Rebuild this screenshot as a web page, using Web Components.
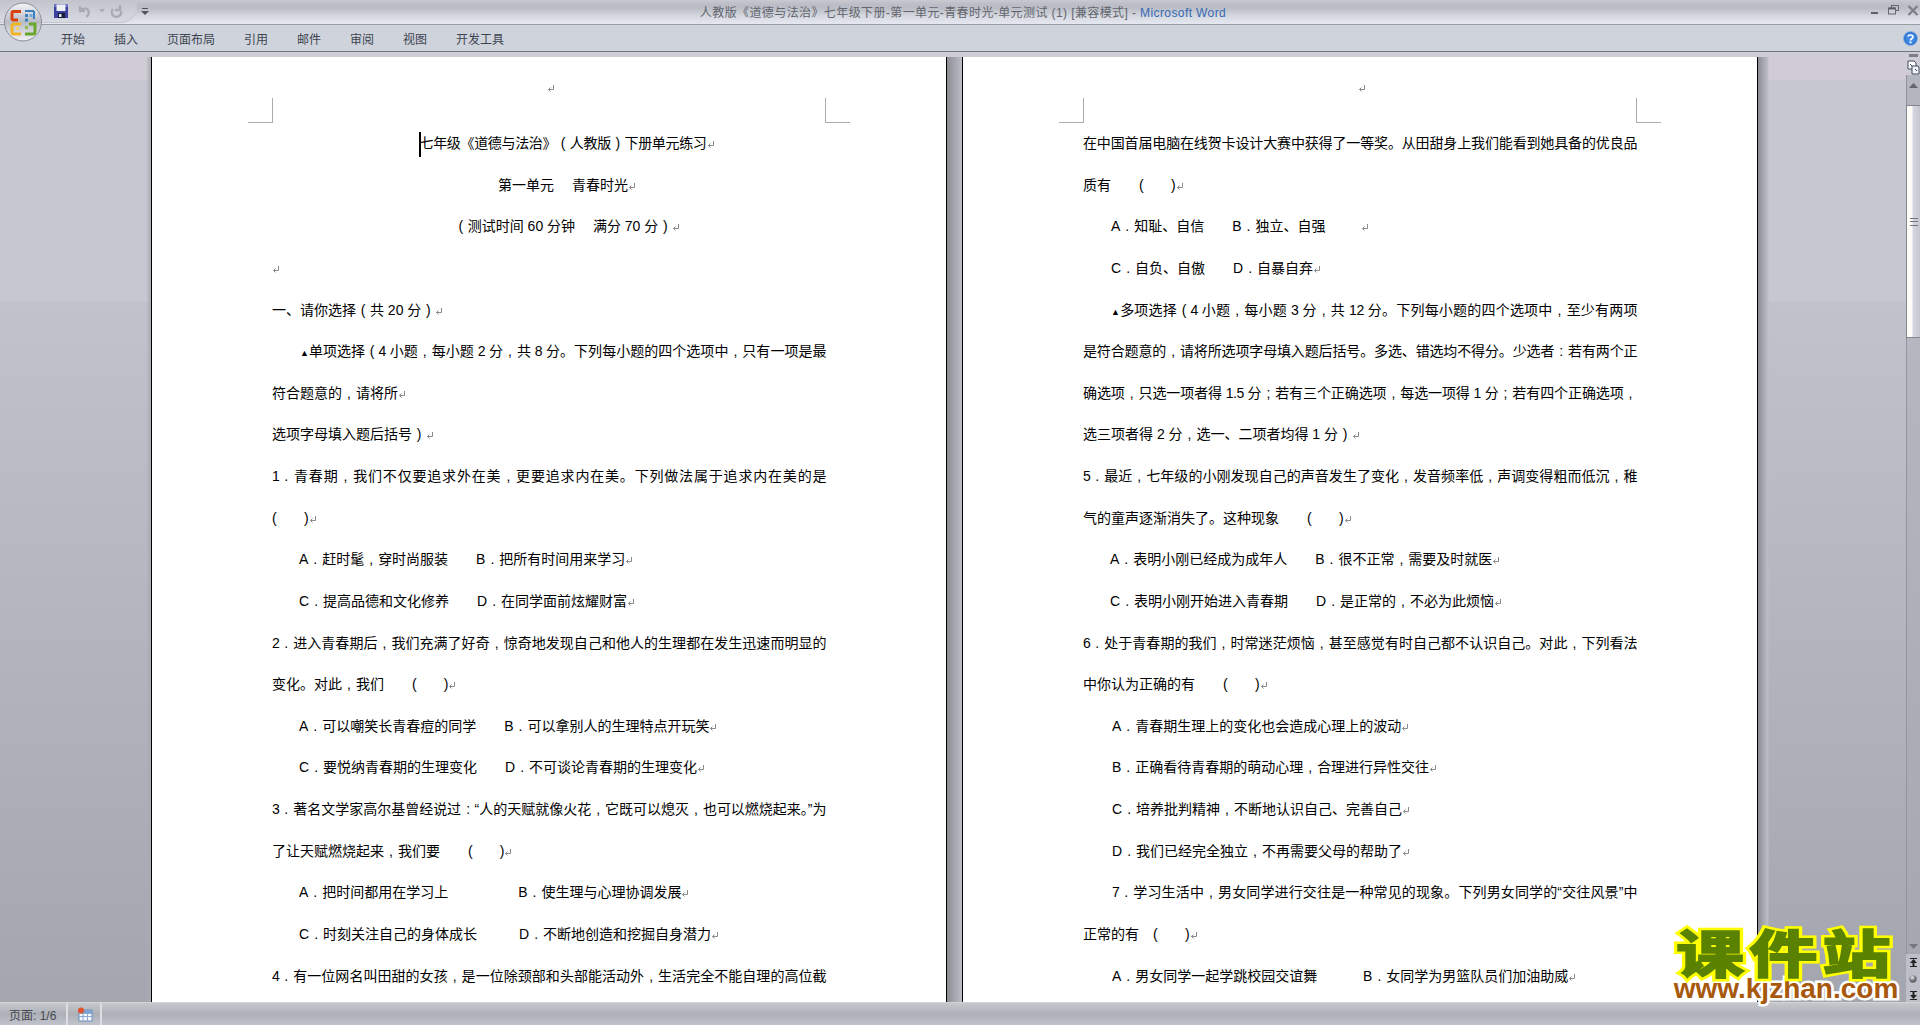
<!DOCTYPE html>
<html lang="zh-CN">
<head>
<meta charset="utf-8">
<title>Word</title>
<style>
    html, body { margin: 0; height: 100%; overflow: hidden; }
    body {
        display: flex;
        flex-direction: column;
        width: 1920px;
        height: 1025px;
        font-family: "Liberation Sans", "Noto Sans CJK SC", sans-serif;
    }
</style>
</head>
<body>
<word-titlebar>人教版《道德与法治》七年级下册-第一单元-青春时光-单元测试 (1) [兼容模式] - <span style="color:#3569b4">Microsoft Word</span></word-titlebar>
<word-ribbon>
    <span>开始</span><span>插入</span><span>页面布局</span><span>引用</span><span>邮件</span><span>审阅</span><span>视图</span><span>开发工具</span>
</word-ribbon>
<word-workspace>
    <doc-page>
        <doc-line center caret style="letter-spacing:-.33px">七年级《道德与法治》（人教版）下册单元练习</doc-line>
        <doc-line center>第一单元　 青春时光</doc-line>
        <doc-line center>（测试时间 60 分钟　 满分 70 分）</doc-line>
        <doc-line></doc-line>
        <doc-line>一、请你选择（共 20 分）</doc-line>
        <doc-line indent="28" j>▲单项选择（4 小题，每小题 2 分，共 8 分。下列每小题的四个选项中，只有一项是最</doc-line>
        <doc-line>符合题意的，请将所</doc-line>
        <doc-line>选项字母填入题后括号）</doc-line>
        <doc-line j>1．青春期，我们不仅要追求外在美，更要追求内在美。下列做法属于追求内在美的是</doc-line>
        <doc-line>(       )</doc-line>
        <doc-line indent="27">A．赶时髦，穿时尚服装　　B．把所有时间用来学习</doc-line>
        <doc-line indent="27">C．提高品德和文化修养　　D．在同学面前炫耀财富</doc-line>
        <doc-line j>2．进入青春期后，我们充满了好奇，惊奇地发现自己和他人的生理都在发生迅速而明显的</doc-line>
        <doc-line>变化。对此，我们　　(       )</doc-line>
        <doc-line indent="27">A．可以嘲笑长青春痘的同学　　B．可以拿别人的生理特点开玩笑</doc-line>
        <doc-line indent="27">C．要悦纳青春期的生理变化　　D．不可谈论青春期的生理变化</doc-line>
        <doc-line j>3．著名文学家高尔基曾经说过：“人的天赋就像火花，它既可以熄灭，也可以燃烧起来。”为</doc-line>
        <doc-line>了让天赋燃烧起来，我们要　　(       )</doc-line>
        <doc-line indent="27">A．把时间都用在学习上　　　　　B．使生理与心理协调发展</doc-line>
        <doc-line indent="27">C．时刻关注自己的身体成长　　　D．不断地创造和挖掘自身潜力</doc-line>
        <doc-line j>4．有一位网名叫田甜的女孩，是一位除颈部和头部能活动外，生活完全不能自理的高位截</doc-line>
    </doc-page>
    <doc-page>
        <doc-line j>在中国首届电脑在线贺卡设计大赛中获得了一等奖。从田甜身上我们能看到她具备的优良品</doc-line>
        <doc-line>质有　　(       )</doc-line>
        <doc-line indent="28">A．知耻、自信　　B．独立、自强　　  </doc-line>
        <doc-line indent="28">C．自负、自傲　　D．自暴自弃</doc-line>
        <doc-line indent="28" j>▲多项选择（4 小题，每小题 3 分，共 12 分。下列每小题的四个选项中，至少有两项</doc-line>
        <doc-line j>是符合题意的，请将所选项字母填入题后括号。多选、错选均不得分。少选者：若有两个正</doc-line>
        <doc-line j>确选项，只选一项者得 1.5 分；若有三个正确选项，每选一项得 1 分；若有四个正确选项，</doc-line>
        <doc-line>选三项者得 2 分，选一、二项者均得 1 分）</doc-line>
        <doc-line j>5．最近，七年级的小刚发现自己的声音发生了变化，发音频率低，声调变得粗而低沉，稚</doc-line>
        <doc-line>气的童声逐渐消失了。这种现象　　(       )</doc-line>
        <doc-line indent="27">A．表明小刚已经成为成年人　　B．很不正常，需要及时就医</doc-line>
        <doc-line indent="27">C．表明小刚开始进入青春期　　D．是正常的，不必为此烦恼</doc-line>
        <doc-line j>6．处于青春期的我们，时常迷茫烦恼，甚至感觉有时自己都不认识自己。对此，下列看法</doc-line>
        <doc-line>中你认为正确的有　　(       )</doc-line>
        <doc-line indent="29">A．青春期生理上的变化也会造成心理上的波动</doc-line>
        <doc-line indent="29">B．正确看待青春期的萌动心理，合理进行异性交往</doc-line>
        <doc-line indent="29">C．培养批判精神，不断地认识自己、完善自己</doc-line>
        <doc-line indent="29">D．我们已经完全独立，不再需要父母的帮助了</doc-line>
        <doc-line indent="29" j>7．学习生活中，男女同学进行交往是一种常见的现象。下列男女同学的“交往风景”中</doc-line>
        <doc-line>正常的有　(       )</doc-line>
        <doc-line indent="29">A．男女同学一起学跳校园交谊舞　　　 B．女同学为男篮队员们加油助威</doc-line>
    </doc-page>
    <word-scrollbar slot="bar"></word-scrollbar>
</word-workspace>
<word-statusbar>页面: 1/6</word-statusbar>
<office-button></office-button>
<kj-watermark></kj-watermark>

<script>
    class WordTitlebar extends HTMLElement {
        constructor() {
            super();
            this.attachShadow({ mode: 'open' }).innerHTML = `
                <style>
                    :host {
                        display: flex;
                        align-items: center;
                        flex: none;
                        height: 24px;
                        border-bottom: 1px solid #9b9da4;
                        background: linear-gradient(#c9cad1 0, #bcbec7 4px, #bbbdc6 8px, #c8cad2 12px, #d6d8e0 16px, #e6e8f1 24px);
                        color: #62656d;
                        font-size: 12px;
                    }
                    .qat {
                        display: flex;
                        align-items: center;
                        flex: none;
                        box-sizing: border-box;
                        width: 137px;
                        height: 23px;
                        margin: -1px 0 0 0;
                        padding-left: 53px;
                        gap: 8px;
                        border: 1px solid #c6c8d0;
                        border-width: 0 1px 1px 0;
                        border-radius: 0 0 16px 0;
                        background: linear-gradient(#c2c4cc, #d8dae2);
                    }
                    .drop { flex: none; margin-left: 4px; width: 9px; }
                    .title { flex: 1; text-align: center; padding-right: 94px; white-space: pre; margin-top: -2px; letter-spacing: .4px; }
                    .win { display: flex; align-items: center; gap: 8px; flex: none; padding-right: 1px; margin-top: -4px; }
                    svg { display: block; }
                </style>
                <div class="qat">
                    <svg width="16" height="16" viewBox="0 0 16 16">
                        <rect x="1" y="1" width="14" height="14" fill="#3b3f9e"/>
                        <rect x="1" y="1" width="14" height="3" fill="#6d74c8"/>
                        <rect x="3.500" y="1.500" width="9" height="6.500" fill="#eef0f8"/>
                        <rect x="5" y="10" width="7" height="5" fill="#1a1c3c"/>
                        <rect x="6" y="11" width="2.500" height="3" fill="#dfe2ea"/>
                    </svg>
                    <svg width="14" height="16" viewBox="0 0 14 16" fill="none" stroke="#a8abb3" stroke-width="2.400">
                        <path d="M3 3v5h5M3.600 7.500C5.500 4.600 10 4.600 11.400 7.600c1 2.400 0 5-2.200 6.200"/>
                    </svg>
                    <svg width="6" height="4" viewBox="0 0 6 4"><path d="M0 0h6L3 3.500z" fill="#a8abb3"/></svg>
                    <svg width="14" height="16" viewBox="0 0 14 16" fill="none" stroke="#a8abb3" stroke-width="2.400" style="margin-left:-3px">
                        <path d="M10 2v5H5M3 6c-1.800 2-1.600 5 .4 6.800 2 1.500 5 1.300 6.800-.6 1-1.200 1.300-2.500 1-4"/>
                    </svg>
                </div>
                <svg class="drop" width="9" height="8" viewBox="0 0 9 8"><path d="M1 0h6v1H1zM0 3h8L4 7z" fill="#50535a"/></svg>
                <div class="title"><slot></slot></div>
                <div class="win">
                    <svg width="10" height="10" viewBox="0 0 10 10"><rect x="1" y="7" width="7" height="2" fill="#5c5f66"/></svg>
                    <svg width="11" height="10" viewBox="0 0 11 10" fill="none" stroke="#666971"><rect x="3.500" y="0.500" width="7" height="5"/><rect x="0.500" y="3" width="7" height="6" fill="#cfd1d9"/><path d="M1 3.500h6" stroke-width="2" stroke="#5c5f66"/></svg>
                    <svg width="12" height="11" viewBox="0 0 12 11" stroke="#7b7e86" stroke-width="2.200"><path d="M1.500 1l9 9M10.500 1l-9 9"/></svg>
                </div>
            `;
        }
    }
    customElements.define('word-titlebar', WordTitlebar);

    class WordRibbon extends HTMLElement {
        constructor() {
            super();
            this.attachShadow({ mode: 'open' }).innerHTML = `
                <style>
                    :host {
                        display: flex;
                        align-items: center;
                        flex: none;
                        gap: 29px;
                        height: 26px;
                        padding-left: 61px;
                        border-bottom: 1px solid #73767d;
                        background: #cfd3dc;
                        color: #3d4450;
                        font-size: 12px;
                    }
                    .help { margin-left: auto; margin-right: 2px; }
                </style>
                <slot></slot>
                <svg class="help" width="15" height="15" viewBox="0 0 15 15">
                    <circle cx="7.500" cy="7.500" r="7" fill="#2f73d2" stroke="#8db4e6"/>
                    <circle cx="7.500" cy="7.500" r="5" fill="#3f8ae6"/>
                    <path d="M5 5.500C5.300 3.600 9.800 3.300 10 5.700 10 7.500 7.500 7.500 7.500 9.500" fill="none" stroke="#fff" stroke-width="1.700"/>
                    <rect x="6.600" y="10.500" width="1.900" height="1.900" fill="#fff"/>
                </svg>
            `;
        }
    }
    customElements.define('word-ribbon', WordRibbon);

    class WordWorkspace extends HTMLElement {
        constructor() {
            super();
            this.attachShadow({ mode: 'open' }).innerHTML = `
                <style>
                    :host {
                        display: flex;
                        flex: 1;
                        min-height: 0;
                        overflow: hidden;
                        background: linear-gradient(#cfccd6 0, #cfccd6 28px, #c5c8d0 28px, #c5c8d0 250px, #c0c3cb 250px, #a3a6ae 100%);
                    }
                    .sheets { display: flex; flex: 1; padding: 5px 0 0 146px; }
                    .shade { flex: none; }
                    .left { width: 5px; background: linear-gradient(90deg, transparent, #a8aab2); }
                    .gap { width: 15px; background: linear-gradient(90deg, #8c8e94, #a4a6ad 50%, #bcbec6); }
                    .right { width: 11px; background: linear-gradient(90deg, #8c8e94, #bcbec6 90%, transparent); }
                </style>
                <div class="sheets">
                    <div class="shade left"></div>
                    <slot name="p0"></slot>
                    <div class="shade gap"></div>
                    <slot name="p1"></slot>
                    <div class="shade right"></div>
                </div>
                <slot name="bar"></slot>
            `;
        }

        connectedCallback() {
            this.querySelectorAll('doc-page').forEach((page, i) => page.slot = 'p' + i);
        }
    }
    customElements.define('word-workspace', WordWorkspace);

    class DocPage extends HTMLElement {
        constructor() {
            super();
            this.attachShadow({ mode: 'open' }).innerHTML = `
                <style>
                    :host {
                        display: block;
                        position: relative;
                        flex: none;
                        width: 794px;
                        height: 1000px;
                        border: solid #000;
                        border-width: 0 1px;
                        background: #fff;
                        color: #000;
                    }
                    .header {
                        display: flex;
                        justify-content: center;
                        align-items: flex-start;
                        box-sizing: border-box;
                        height: 66px;
                        padding: 28px 0 0 4px;
                    }
                    .body { padding: 0 120px; }
                    .crop { position: absolute; top: 41px; width: 24px; height: 24px; border-bottom: 1px solid #aaaab2; }
                    .tl { left: 96px; border-right: 1px solid #aaaab2; }
                    .tr { right: 96px; border-left: 1px solid #aaaab2; }
                    svg { display: block; }
                </style>
                <div class="crop tl"></div>
                <div class="crop tr"></div>
                <div class="header">
                    <svg width="8" height="8" viewBox="0 0 8 8" fill="none" stroke="#8a8a8a"><path d="M6.500 0v4.500H1.500M3.500 2.500l-2 2 2 2"/></svg>
                </div>
                <div class="body"><slot></slot></div>
            `;
        }
    }
    customElements.define('doc-page', DocPage);

    // the reference draws this punctuation with the latin font, centred in a full CJK cell
    const PUNCT_CELL = {
        '，': [',', 5],
        '（': ['(', 4.67],
        '）': [')', 4.67],
        '：': [':', 5],
        '；': [';', 5],
        '．': ['.', 5]
    };

    class DocLine extends HTMLElement {
        constructor() {
            super();
            this.attachShadow({ mode: 'open' }).innerHTML = `
                <style>
                    :host {
                        display: block;
                        height: 41.63px;
                        line-height: 41.63px;
                        font-size: 14px;
                    }
                    .t { white-space: pre; }
                    :host([j]) .t { white-space: nowrap; letter-spacing: -.5px; text-align: justify; text-align-last: justify; }
                    :host([center]) { padding-left: 36px; text-align: center; }
                    :host([j]) .mark { display: none; }
                    .mark { display: inline-block; vertical-align: -1px; }
                    .caret {
                        display: none;
                        width: 2px;
                        height: 25px;
                        margin-right: -2px;
                        vertical-align: middle;
                        background: #000;
                    }
                    :host([caret]) .caret { display: inline-block; }
                </style>
                <div class="t"><span class="caret"></span><slot></slot><svg class="mark" width="8" height="8" viewBox="0 0 8 8" fill="none" stroke="#8a8a8a"><path d="M6.500 0v4.500H1.500M3.500 2.500l-2 2 2 2"/></svg></div>
            `;
        }

        connectedCallback() {
            const indent = this.getAttribute('indent');
            if (indent) this.style.paddingLeft = indent + 'px';
            this.innerHTML = this.textContent
                .replace(/[，（）：；．]/g, (c) => {
                    const [glyph, pad] = PUNCT_CELL[c];
                    return `<span style="padding:0 ${pad}px">${glyph}</span>`;
                })
                .replace('▲', '<span style="font-size:9px">▲</span>');
        }
    }
    customElements.define('doc-line', DocLine);

    class WordScrollbar extends HTMLElement {
        constructor() {
            super();
            this.attachShadow({ mode: 'open' }).innerHTML = `
                <style>
                    :host {
                        display: flex;
                        flex-direction: column;
                        align-items: center;
                        flex: none;
                        box-sizing: border-box;
                        width: 14px;
                        height: 100%;
                    }
                    .split { flex: none; width: 9px; height: 3px; margin: 2px 0 3px; background: #7b7e86; }
                    .ruler { flex: none; height: 15px; }
                    .up {
                        display: flex;
                        justify-content: center;
                        flex: none;
                        box-sizing: border-box;
                        width: 14px;
                        height: 30px;
                        padding-top: 8px;
                        border-left: 1px solid #8f929a;
                        background: #b3b6be;
                    }
                    .thumb {
                        display: flex;
                        align-items: center;
                        justify-content: center;
                        flex: none;
                        box-sizing: border-box;
                        width: 14px;
                        height: 233px;
                        border: 1px solid #83868e;
                        border-right: 0;
                        background: linear-gradient(90deg, #fdfcf6 0, #fdfcf6 35%, #d3d6de 50%, #c4c7d0 100%);
                    }
                    .grip { width: 8px; height: 6px; border-top: 1px solid #73767d; border-bottom: 1px solid #73767d; }
                    .track {
                        display: flex;
                        flex-direction: column;
                        justify-content: flex-end;
                        align-items: center;
                        flex: 1;
                        box-sizing: border-box;
                        width: 14px;
                        padding-bottom: 5px;
                        border-left: 1px solid #92959d;
                        background: linear-gradient(#b4b7bf, #a5a8b0);
                    }
                    .nav {
                        display: flex;
                        flex-direction: column;
                        align-items: center;
                        justify-content: space-between;
                        flex: none;
                        box-sizing: border-box;
                        width: 14px;
                        height: 48px;
                        padding: 4px 0 2px;
                        background: #bcbfc7;
                    }
                    svg { display: block; }
                </style>
                <div class="split"></div>
                <svg class="ruler" width="13" height="15" viewBox="0 0 13 15">
                    <path d="M1 1h6l2 2v6H1z" fill="#fff" stroke="#3f4a5c"/>
                    <path d="M5 6h6l1 1v7H5z" fill="#f2f4f9" stroke="#3f4a5c"/>
                    <path d="M3 4l2 2M8 9l2 2" stroke="#3f4a5c"/>
                </svg>
                <div class="up"><svg width="9" height="5" viewBox="0 0 9 5"><path d="M4.500 0L9 5H0z" fill="#62656d"/></svg></div>
                <div class="thumb"><div class="grip"><svg width="8" height="1" style="margin-top:2.500px"><rect width="8" height="1" fill="#73767d"/></svg></div></div>
                <div class="track"><svg width="9" height="5" viewBox="0 0 9 5"><path d="M0 0h9L4.500 5z" fill="#75787f"/></svg></div>
                <div class="nav">
                    <svg width="9" height="9" viewBox="0 0 9 9"><path d="M1 0h7v1H1zM4.500 1L8 5H1zM3.500 5h2v3h-2zM1 8h7v1H1z" fill="#222"/></svg>
                    <svg width="8" height="8" viewBox="0 0 8 8"><defs><radialGradient id="o" cx=".4" cy=".3"><stop offset="0" stop-color="#e8e8ea"/><stop offset="1" stop-color="#62656b"/></radialGradient></defs><circle cx="4" cy="4" r="3.700" fill="url(#o)"/></svg>
                    <svg width="9" height="9" viewBox="0 0 9 9"><path d="M1 0h7v1H1zM3.500 1h2v3h-2zM1 4h7L4.500 8zM1 8h7v1H1z" fill="#222"/></svg>
                </div>
            `;
        }
    }
    customElements.define('word-scrollbar', WordScrollbar);

    class WordStatusbar extends HTMLElement {
        constructor() {
            super();
            this.attachShadow({ mode: 'open' }).innerHTML = `
                <style>
                    :host {
                        display: flex;
                        flex: none;
                        box-sizing: border-box;
                        height: 23px;
                        border-top: 1px solid #d2d4d9;
                        background: linear-gradient(#c6c8ce, #adb0b6 50%, #c0c3cb);
                        color: #45484f;
                        font-size: 12px;
                    }
                    .cell {
                        display: flex;
                        align-items: center;
                        box-sizing: border-box;
                        border-right: 2px solid #dcdee3;
                    }
                    .page { width: 68px; padding-left: 9px; }
                    .icon { width: 34px; padding-left: 9px; }
                </style>
                <div class="cell page"><slot></slot></div>
                <div class="cell icon">
                    <svg width="16" height="15" viewBox="0 0 16 15">
                        <rect x="2" y="3" width="13" height="11" fill="#f4f7fc" stroke="#6f8fbc"/>
                        <path d="M2 6.500h13M2 9.500h13M6 6.500V14M10.500 6.500V14" stroke="#8faad0"/>
                        <rect x="2" y="3" width="13" height="3" fill="#7ea0d2"/>
                        <circle cx="4" cy="3.500" r="3" fill="#e0532c"/>
                    </svg>
                </div>
            `;
        }
    }
    customElements.define('word-statusbar', WordStatusbar);

    class OfficeButton extends HTMLElement {
        constructor() {
            super();
            this.attachShadow({ mode: 'open' }).innerHTML = `
                <style>
                    :host { position: absolute; left: 4px; top: 2px; width: 38px; height: 40px; }
                </style>
                <svg width="38" height="40" viewBox="0 0 38 40" fill="none">
                    <defs>
                        <linearGradient id="rim" x1="0" y1="0" x2="0" y2="1">
                            <stop offset="0" stop-color="#f4f5f8"/><stop offset=".5" stop-color="#b9bcc4"/><stop offset="1" stop-color="#f0f1f4"/>
                        </linearGradient>
                    </defs>
                    <ellipse cx="19" cy="20" rx="18.500" ry="19" fill="url(#rim)" stroke="#8a8d95"/>
                    <path d="M17 9.500h-7.500q-1.500 0-1.500 1.500v5.500q0 1.500 1.500 1.500H14" stroke="#d9410f" stroke-width="3"/>
                    <path d="M21 9h9M30 9v8" stroke="#3a7fc0" stroke-width="2"/><rect x="21" y="12" width="3" height="3" fill="#3a7fc0"/><rect x="25.500" y="12" width="3" height="3" fill="#6fa8dc"/><rect x="21" y="16.500" width="3" height="3" fill="#3a7fc0"/>
                    <path d="M8 22h9M8 22v8q0 2 2 2h7" stroke="#f0b429" stroke-width="3"/><rect x="12" y="25" width="3" height="3" fill="#f6cf6a"/>
                    <path d="M21 32h8q2 0 2-2v-8h-6" stroke="#6aa52c" stroke-width="3"/><rect x="21" y="24" width="3" height="3" fill="#8cc04a"/>
                </svg>
            `;
        }
    }
    customElements.define('office-button', OfficeButton);

    class KjWatermark extends HTMLElement {
        constructor() {
            super();
            this.attachShadow({ mode: 'open' }).innerHTML = `
                <style>
                    :host {
                        position: absolute;
                        left: 1668px;
                        top: 924px;
                        width: 236px;
                        font-family: "Noto Sans CJK SC", "Liberation Sans", sans-serif;
                        font-weight: 700;
                        text-align: center;
                    }
                    .big {
                        position: relative;
                        height: 54px;
                        line-height: 54px;
                        font-size: 51px;
                        color: #5a8200;
                        letter-spacing: 4px;
                        white-space: nowrap;
                        transform: scaleX(1.33);
                        -webkit-text-stroke: 2px #5a8200;
                    }
                    .big::before {
                        content: attr(data-t);
                        position: absolute;
                        left: 0;
                        right: 0;
                        top: 0;
                        z-index: -1;
                        -webkit-text-stroke: 7px #ffff00;
                    }
                    .url {
                        height: 22px;
                        line-height: 22px;
                        font-family: "Liberation Sans", sans-serif;
                        font-size: 28px;
                        font-weight: 700;
                        color: #a8580c;
                        paint-order: stroke fill;
                        -webkit-text-stroke: 5px #fff;
                        white-space: nowrap;
                    }
                </style>
                <div class="big" data-t="课件站">课件站</div>
                <div class="url">www.kjzhan.com</div>
            `;
        }
    }
    customElements.define('kj-watermark', KjWatermark);
</script>
</body>
</html>
